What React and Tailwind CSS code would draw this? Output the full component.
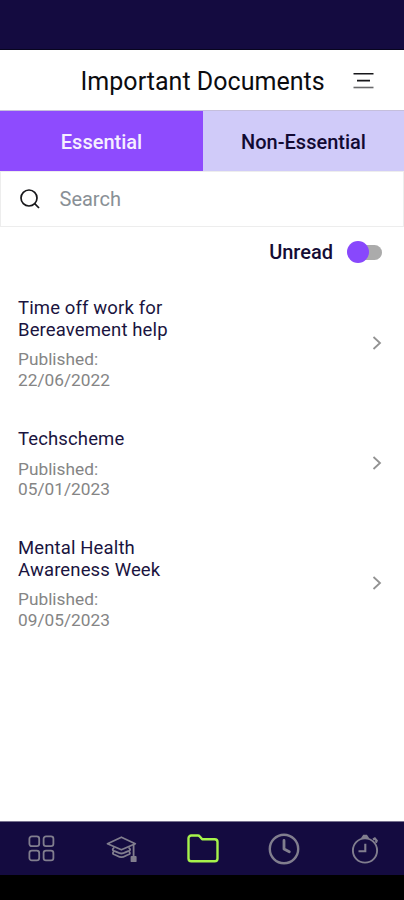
import React, { useState } from "react";

const documents = [
  { id: 1, title: "Time off work for Bereavement help", published: "22/06/2022" },
  { id: 2, title: "Techscheme", published: "05/01/2023" },
  { id: 3, title: "Mental Health Awareness Week", published: "09/05/2023" },
];

const GridIcon = () => (
  <svg width="27" height="27" viewBox="0 0 27 27" fill="none" stroke="currentColor" strokeWidth="1.8">
    <rect x="1.4" y="1.4" width="9.8" height="9.8" rx="2.4" />
    <rect x="15.6" y="1.4" width="9.8" height="9.8" rx="2.4" />
    <rect x="1.4" y="15.6" width="9.8" height="9.8" rx="2.4" />
    <rect x="15.6" y="15.6" width="9.8" height="9.8" rx="2.4" />
  </svg>
);

const CapIcon = () => (
  <svg width="32" height="28" viewBox="0 0 32 28" fill="none" stroke="currentColor" strokeWidth="1.8" strokeLinejoin="round" strokeLinecap="round">
    <path d="M1.5 8.7 15.4 2.2 29.300 8.700 15.400 14.800Z" />
    <path d="M27.600 9.600V22.500" />
    <path d="M7.700 13c-1.500 1-1.300 2.300.2 2.900 2.900.7 4.400 2.600 7.500 2.600s4.600-1.900 7.500-2.600c1.500-.6 1.700-1.900.2-2.900" />
    <path d="M7.700 16.600c-1.300 1-1 2.400.4 2.900 2.800.8 4.300 2.700 7.300 2.700s4.500-1.900 7.300-2.700c1.400-.5 1.700-1.900.4-2.900" />
    <rect x="25.500" y="22" width="4.200" height="4.200" fill="currentColor" />
  </svg>
);

const FolderIcon = () => (
  <svg width="32" height="29" viewBox="0 0 32 29" fill="none" stroke="currentColor" strokeWidth="2.4" strokeLinejoin="round">
    <path d="M4.3 1.5h6.6c.8 0 1.4.3 1.9.9l2.4 2.9h12.5a2.8 2.8 0 0 1 2.8 2.8v16.400a2.800 2.800 0 0 1-2.800 2.800H4.300a2.800 2.800 0 0 1-2.800-2.800V4.300a2.800 2.800 0 0 1 2.800-2.800Z" />
  </svg>
);

const ClockIcon = () => (
  <svg width="32" height="32" viewBox="0 0 32 32" fill="none" stroke="currentColor" strokeWidth="2.4" strokeLinecap="round" strokeLinejoin="round">
    <circle cx="16" cy="16" r="14.2" />
    <path d="M16 7.500V16l5.300 2.800" strokeWidth="2.8" />
  </svg>
);

const StopwatchIcon = () => (
  <svg width="28" height="30" viewBox="0 0 28 30" fill="none" stroke="currentColor" strokeWidth="1.9">
    <circle cx="14" cy="16.5" r="12.1" />
    <path d="M14.300 9.700V17.300H7.500" strokeWidth="2.1" />
    <path d="M11.500 3.600 12.800 1.600h2.600l1.300 2Z" fill="currentColor" />
    <path d="m22 5.500 1.800-1 1.900 2.200-.9 2" strokeWidth="2.2" />
  </svg>
);

const tabs = [
  { id: "dashboard", icon: <GridIcon /> },
  { id: "learning", icon: <CapIcon /> },
  { id: "documents", icon: <FolderIcon /> },
  { id: "clock", icon: <ClockIcon /> },
  { id: "timer", icon: <StopwatchIcon /> },
];

export default function App() {
  const [category, setCategory] = useState("essential");
  const [active, setActive] = useState("documents");

  return (
    <div className="flex h-[900px] w-[404px] flex-col overflow-hidden bg-white font-['Roboto','Liberation_Sans',sans-serif]">
      {/* Status bar */}
      <div className="h-[50px] shrink-0 border-b border-[#08051f] bg-[#140b40]"></div>

      {/* Header */}
      <header className="flex h-[60px] shrink-0 items-center justify-between pt-[3px] pr-[30px] pl-[80.5px]">
        <h1 className="text-[25px] tracking-[0.03px] whitespace-nowrap text-[#0c0c0f]">Important Documents</h1>
        <button aria-label="Menu" className="-mt-[3px]">
          <svg width="21" height="17" viewBox="0 0 21 17" fill="none" stroke="#17171a" strokeWidth="1.6">
            <path d="M.5 1.700h20M4 8.600h13" />
            <path d="M.5 15.500h20" stroke="#6a6a6c" />
          </svg>
        </button>
      </header>

      {/* Category tabs */}
      <div className="flex h-[61px] shrink-0 border-t border-[#c5bfdc] text-[20px] font-medium">
        <button
          onClick={() => setCategory("essential")}
          className={`w-[203px] pt-0.5 ${category === "essential" ? "bg-[#8e4bfe] text-[#f6efff]" : "bg-[#d0cbf9] text-[#120a33]"}`}
        >
          Essential
        </button>
        <button
          onClick={() => setCategory("other")}
          className={`flex-1 pt-0.5 ${category === "other" ? "bg-[#8e4bfe] text-[#f6efff]" : "bg-[#d0cbf9] text-[#120a33]"}`}
        >
          Non-Essential
        </button>
      </div>

      {/* Search */}
      <div className="flex h-14 shrink-0 items-center border border-[#ededed] pl-[18px]">
        <svg width="22" height="22" viewBox="0 0 22 22" fill="none" stroke="#17171a" strokeWidth="1.7">
          <circle cx="10" cy="10" r="8" />
          <path d="m15.700 15.700 4.300 4.300" />
        </svg>
        <span className="ml-[18.5px] text-[20px] text-[#899096]">Search</span>
      </div>

      {/* Unread filter */}
      <div className="flex h-[50px] shrink-0 items-center justify-end pr-[22px]">
        <span className="text-[20px] font-medium text-[#150d35]">Unread</span>
        <button aria-label="Unread only" className="ml-[14px] flex h-[23px] w-[35px] items-center">
          <span className="relative z-10 h-[22px] w-[22px] shrink-0 rounded-full bg-[#8848fc]"></span>
          <span className="-ml-[11px] h-[15px] flex-1 rounded-r-full bg-[#ababab]"></span>
        </button>
      </div>

      {/* Documents */}
      <ul className="flex flex-1 flex-col gap-[38px] pt-[21px] pr-[22px] pl-[18px]">
        {documents.map(({ id, title, published }) => (
          <li key={id} className="flex items-center justify-between">
            <div className="w-[160px]">
              <p className="text-[18.5px] leading-[21.7px] tracking-[0.13px] text-[#1a1440]">{title}</p>
              <p className="mt-2 w-[110px] text-[17.3px] leading-[20.7px] text-[#858585]">Published: {published}</p>
            </div>
            <svg className="mb-[3px]" width="10" height="14" viewBox="0 0 10 14" fill="none" stroke="#929292" strokeWidth="1.8">
              <path d="m1.500 1 6.500 6-6.500 6" />
            </svg>
          </li>
        ))}
      </ul>

      {/* Bottom navigation */}
      <nav className="flex h-[54px] shrink-0 border-t border-[#77728f] bg-[#140b40]">
        <div className="-mr-[1.5px] flex flex-1 pl-[0.5px]">
          {tabs.map(({ id, icon }) => (
            <button
              key={id}
              aria-label={id}
              onClick={() => setActive(id)}
              className={`flex flex-1 items-center justify-center ${active === id ? "text-[#a6f34b]" : "text-[#817e8e]"}`}
            >
              {icon}
            </button>
          ))}
        </div>
      </nav>
      <div className="h-[25px] shrink-0 bg-black"></div>
    </div>
  );
}
